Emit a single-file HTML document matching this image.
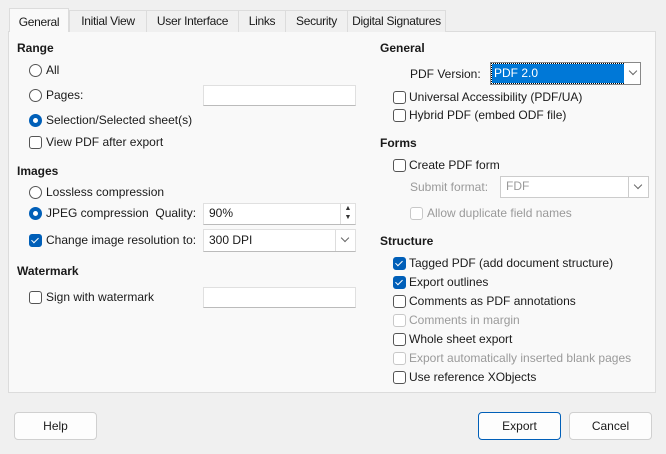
<!DOCTYPE html><html><head><style>
body{margin:0;width:666px;height:454px;background:#f0f0f0;font-family:"Liberation Sans",sans-serif;font-size:12px;color:#1a1a1a;position:relative;overflow:hidden}
div,span{position:absolute;box-sizing:border-box}
.panel{left:8px;top:31px;width:648px;height:362px;background:#f9f9f9;border:1px solid #dcdcdc}
.tab{top:10px;height:22px;border:1px solid #dcdcdc;border-bottom:none;background:#f0f0f0;text-align:center;line-height:21px;font-size:12px;letter-spacing:-0.3px;white-space:nowrap}
.tab.a{top:8px;height:24px;background:#f9f9f9;line-height:26px}
.h{font-weight:bold;font-size:12px}
.l{white-space:nowrap}
.r{width:13px;height:13px;border:1px solid #555;border-radius:50%;background:#fff}
.r.on{border:4px solid #005fb8}
.c{width:13px;height:13px;border:1px solid #555;border-radius:3px;background:#fff}
.c.on{background:#005fb8;border-color:#005fb8}
.c.on:after{content:"";position:absolute;left:3px;top:1px;width:3px;height:6px;border:solid #fff;border-width:0 1px 1px 0;transform:rotate(45deg)}
.c.d{border-color:#c8c8c8}
.g{color:#9a9a9a}
.in{background:#fff;border:1px solid #e0e0e0;border-bottom-color:#bbb;padding-left:5px;line-height:19px}
.btn{height:28px;border:1px solid #d0d0d0;border-radius:4px;background:#fdfdfd;text-align:center;line-height:26px}
.arr{right:0;top:0;width:20px;height:100%;border-left:1px solid #ddd;background:#fff}
.arr:after{content:"";position:absolute;left:6px;top:5px;width:5px;height:5px;border:solid #666;border-width:0 1px 1px 0;transform:rotate(45deg)}
</style></head><body>
<div class="panel"></div>
<div class="tab a" style="left:9px;width:60px">General</div>
<div class="tab" style="left:69px;width:78px">Initial View</div>
<div class="tab" style="left:146px;width:93px">User Interface</div>
<div class="tab" style="left:238px;width:48px">Links</div>
<div class="tab" style="left:285px;width:63px">Security</div>
<div class="tab" style="left:347px;width:99px">Digital Signatures</div>

<div class="h" style="left:17px;top:41px">Range</div>
<div class="r" style="left:29px;top:64px"></div><div class="l" style="left:46px;top:63px">All</div>
<div class="r" style="left:29px;top:89px"></div><div class="l" style="left:46px;top:88px">Pages:</div>
<div class="in" style="left:203px;top:85px;width:153px;height:21px"></div>
<div class="r on" style="left:29px;top:114px"></div><div class="l" style="left:46px;top:113px">Selection/Selected sheet(s)</div>
<div class="c" style="left:29px;top:136px"></div><div class="l" style="left:46px;top:135px">View PDF after export</div>

<div class="h" style="left:17px;top:164px">Images</div>
<div class="r" style="left:29px;top:186px"></div><div class="l" style="left:46px;top:185px">Lossless compression</div>
<div class="r on" style="left:29px;top:207px"></div><div class="l" style="left:46px;top:206px">JPEG compression&nbsp; Quality:</div>
<div class="in" style="left:203px;top:203px;width:153px;height:22px">90%<span style="right:0;top:0;width:15px;height:20px;border-left:1px solid #ddd;font-size:7px;line-height:9px;text-align:center;color:#333">▲<br>▼</span></div>
<div class="c on" style="left:29px;top:234px"></div><div class="l" style="left:46px;top:233px">Change image resolution to:</div>
<div class="in" style="left:203px;top:229px;width:153px;height:23px;line-height:21px">300 DPI<span class="arr"></span></div>

<div class="h" style="left:17px;top:264px">Watermark</div>
<div class="c" style="left:29px;top:291px"></div><div class="l" style="left:46px;top:290px">Sign with watermark</div>
<div class="in" style="left:203px;top:287px;width:153px;height:21px"></div>

<div class="h" style="left:380px;top:41px">General</div>
<div class="l" style="left:410px;top:67px">PDF Version:</div>
<div style="left:490px;top:62px;width:151px;height:23px;border:1px solid #888;background:#fff"><span style="left:1px;top:1px;width:133px;height:19px;background:#0078d7;color:#fff;padding-left:2px;line-height:19px;outline:1px dotted #000">PDF 2.0</span><span class="arr" style="border:none;width:16px"></span></div>
<div class="c" style="left:393px;top:91px"></div><div class="l" style="left:409px;top:90px">Universal Accessibility (PDF/UA)</div>
<div class="c" style="left:393px;top:109px"></div><div class="l" style="left:409px;top:108px">Hybrid PDF (embed ODF file)</div>

<div class="h" style="left:380px;top:136px">Forms</div>
<div class="c" style="left:393px;top:159px"></div><div class="l" style="left:409px;top:158px">Create PDF form</div>
<div class="l g" style="left:410px;top:180px">Submit format:</div>
<div class="in g" style="left:500px;top:176px;width:149px;height:22px;border-color:#ccc">FDF<span class="arr" style="border-left-color:#ccc"></span></div>
<div class="c d" style="left:410px;top:207px"></div><div class="l g" style="left:427px;top:206px">Allow duplicate field names</div>

<div class="h" style="left:380px;top:234px">Structure</div>
<div class="c on" style="left:393px;top:257px"></div><div class="l" style="left:409px;top:256px">Tagged PDF (add document structure)</div>
<div class="c on" style="left:393px;top:276px"></div><div class="l" style="left:409px;top:275px">Export outlines</div>
<div class="c" style="left:393px;top:295px"></div><div class="l" style="left:409px;top:294px">Comments as PDF annotations</div>
<div class="c d" style="left:393px;top:314px"></div><div class="l g" style="left:409px;top:313px">Comments in margin</div>
<div class="c" style="left:393px;top:333px"></div><div class="l" style="left:409px;top:332px">Whole sheet export</div>
<div class="c d" style="left:393px;top:352px"></div><div class="l g" style="left:409px;top:351px">Export automatically inserted blank pages</div>
<div class="c" style="left:393px;top:371px"></div><div class="l" style="left:409px;top:370px">Use reference XObjects</div>

<div class="btn" style="left:14px;top:412px;width:83px">Help</div>
<div class="btn" style="left:478px;top:412px;width:83px;border-color:#005fb8">Export</div>
<div class="btn" style="left:569px;top:412px;width:83px">Cancel</div>
</body></html>
